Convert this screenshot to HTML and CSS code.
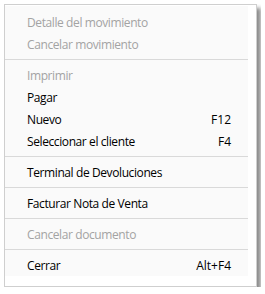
FILE: index.html
```html
<!DOCTYPE html>
<html lang="es">
<head>
  <meta charset="UTF-8" />
  <title>Menú</title>
  <link rel="stylesheet" href="styles.css">
</head>
<body>

  <div class="menu">
    <div class="menu-inner">
      <div class="item disabled"><span>Detalle del movimiento</span></div>
      <div class="item disabled"><span>Cancelar movimiento</span></div>
      <div class="sep"></div>
      <div class="item disabled"><span>Imprimir</span></div>
      <div class="item"><span>Pagar</span></div>
      <div class="item"><span>Nuevo</span><span class="key">F12</span></div>
      <div class="item"><span>Seleccionar el cliente</span><span class="key">F4</span></div>
      <div class="sep"></div>
      <div class="item"><span>Terminal de Devoluciones</span></div>
      <div class="sep"></div>
      <div class="item"><span>Facturar Nota de Venta</span></div>
      <div class="sep"></div>
      <div class="item disabled"><span>Cancelar documento</span></div>
      <div class="sep"></div>
      <div class="item"><span>Cerrar</span><span class="key">Alt+F4</span></div>
    </div>
  </div>

</body>
</html>
```

FILE: styles.css
```css
body {
  margin: 4px;
  background: #fff;
  font-family: 'Open Sans', sans-serif;
  font-size: 12px;
  letter-spacing: -0.4px;
  color: #000;
}

.menu {
  width: 251px;
  height: 281px;
  background: #fff;
  border: 1px solid #cfcfcf;
  box-shadow: 4px 4px 4px rgba(0, 0, 0, 0.45);
}

.menu-inner {
  margin: 1px 8px 0 0;
  padding-top: 5px;
  background: #fafafa;
}

.item {
  height: 22px;
  display: flex;
  align-items: center;
  justify-content: space-between;
  padding: 0 17px 0 22px;
}

.item.disabled {
  color: #a3a3a3;
}

.key {
  letter-spacing: 0;
}

.sep {
  height: 1px;
  background: #d9d9d9;
  margin: 4px 0;
}
```
